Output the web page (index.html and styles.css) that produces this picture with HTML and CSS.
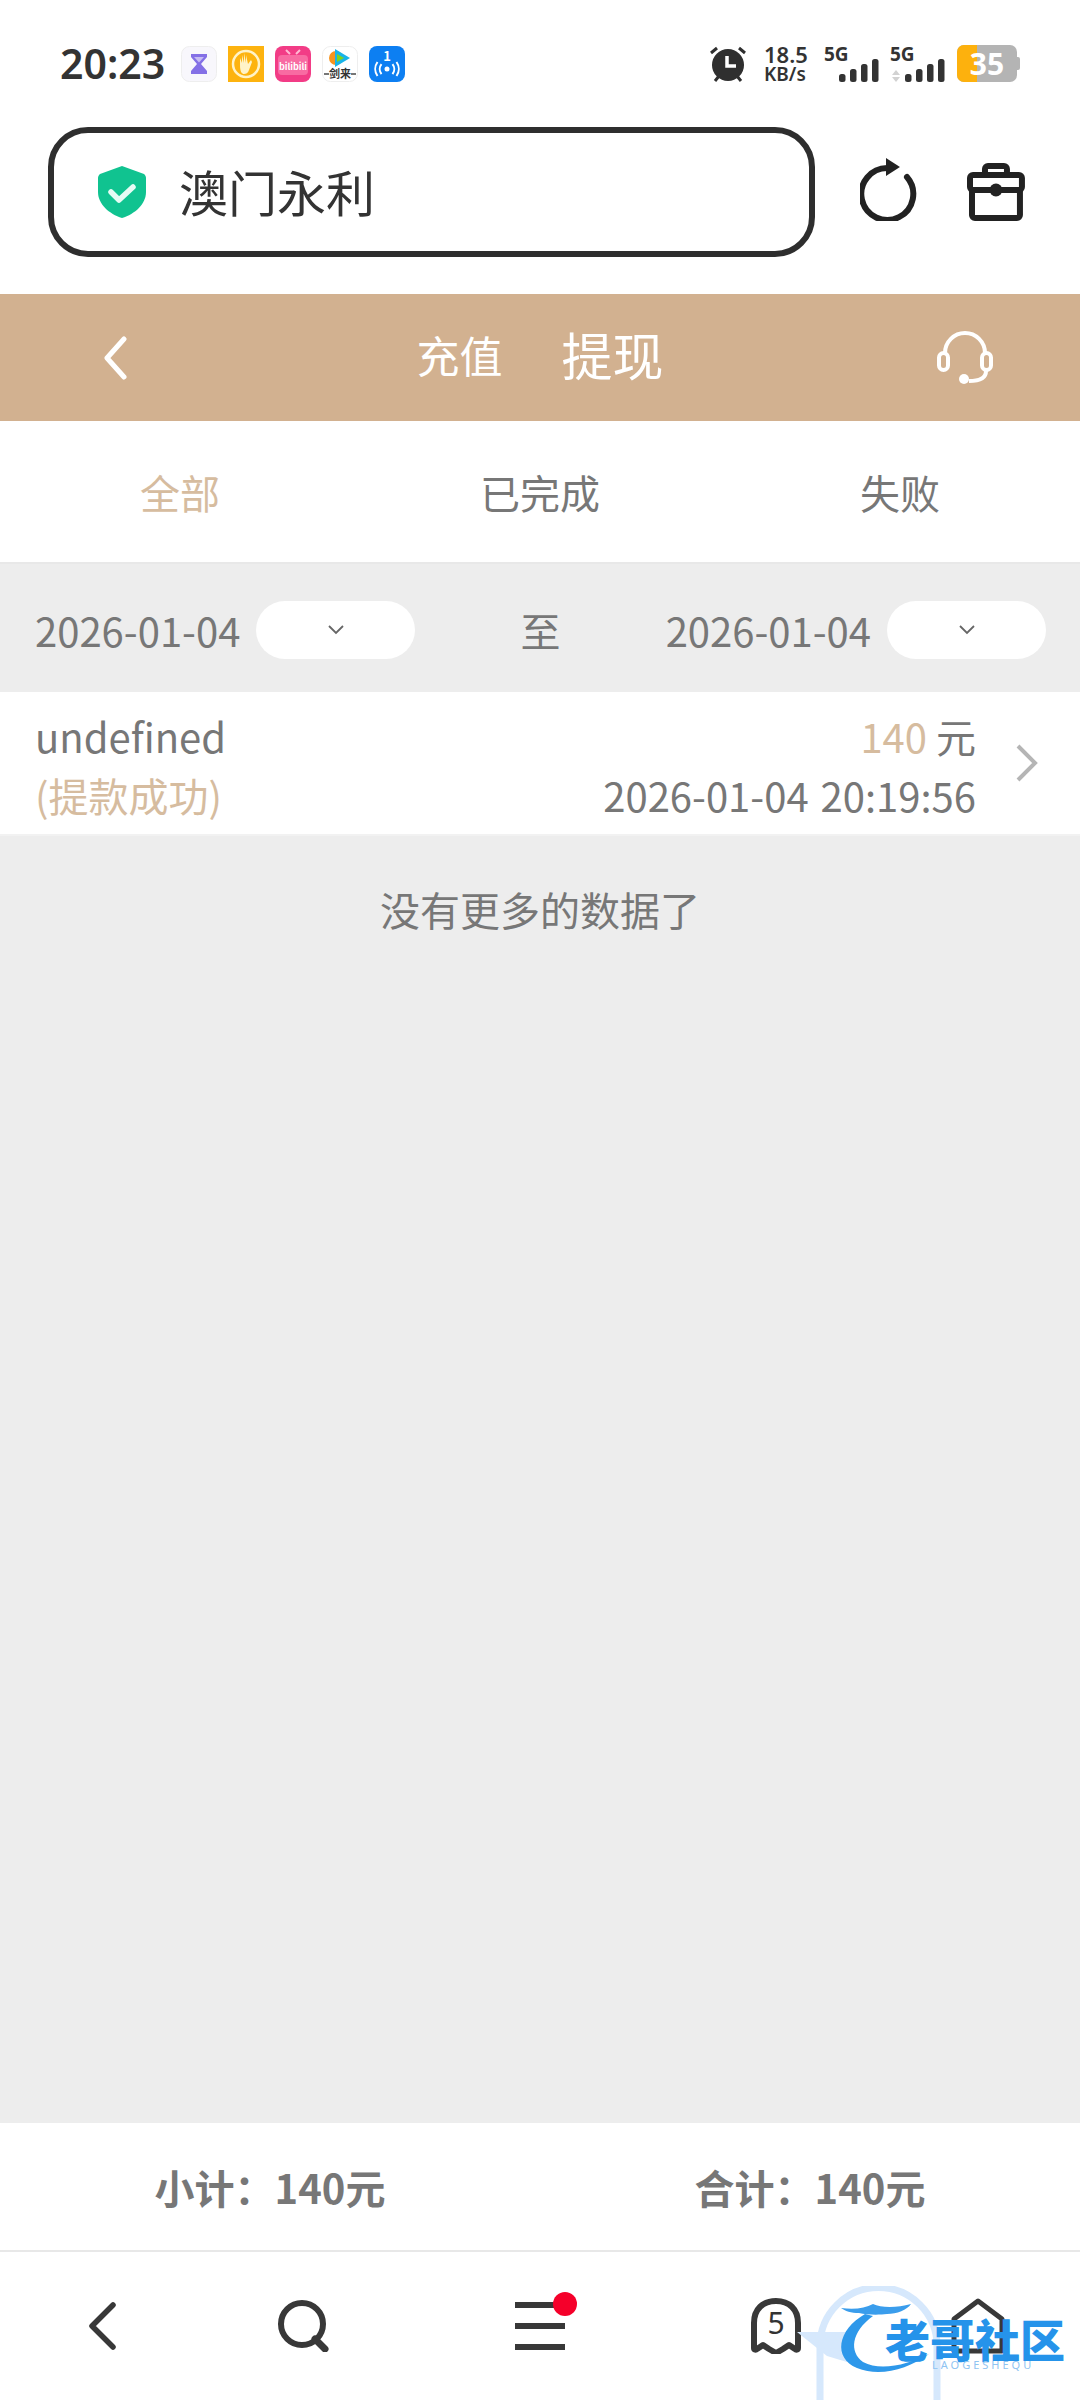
FILE: index.html
```html
<!DOCTYPE html>
<html lang="zh-CN">
<head>
    <meta charset="UTF-8">
    <meta name="viewport" content="width=device-width, initial-scale=1.0">
    <title>提现记录</title>
    <link rel="stylesheet" href="styles.css">
</head>
<body>
    <div class="page">
        <!-- phone status bar -->
        <div class="status-bar">
            <div class="status-left">
                <span class="clock">20:23</span>
                <div class="app-icons">
                    <svg class="app-icon" viewBox="0 0 36 36"><rect x="0.5" y="0.5" width="35" height="35" rx="8" fill="#f8f7fc" stroke="#eeeeee"/><path d="M10 8h16v3l-6 7 6 7v3H10v-3l6-7-6-7z" fill="#8470e6"/><path d="M13 11h10l-5 5.5z" fill="#c6bcf3"/></svg>
                    <svg class="app-icon" viewBox="0 0 36 36"><rect width="36" height="36" fill="#fdb30f"/><circle cx="18" cy="18" r="13" fill="none" stroke="#fff3c8" stroke-width="2.5"/><path d="M12 19v-7l2 5v-8l2 8V7l2 10V9l2 9 3-4 1 2-3 8c-1 3-3 4-5 4s-4-2-4-9z" fill="#fff3c8"/></svg>
                    <svg class="app-icon" viewBox="0 0 36 36"><rect width="36" height="36" rx="8" fill="#f23c86"/><path d="M11 4l4 4M25 4l-4 4" stroke="#ffb9d3" stroke-width="2"/><rect x="3" y="9" width="30" height="20" rx="4" fill="#f86ba2"/><text class="bili-text" x="18" y="24" text-anchor="middle">bilibili</text></svg>
                    <svg class="app-icon" viewBox="0 0 36 36"><rect x="0.5" y="0.5" width="35" height="35" rx="8" fill="#ffffff" stroke="#eeeeee"/><circle cx="14" cy="12" r="7" fill="#f7941e"/><path d="M13 3l15 9-15 9z" fill="#18b4e9"/><path d="M15 8l7 4-7 4z" fill="#7ed321"/><text class="tv-text" x="18" y="32" text-anchor="middle">剑来</text><path d="M2 28h5M29 28h5" stroke="#777" stroke-width="2"/></svg>
                    <svg class="app-icon" viewBox="0 0 36 36"><rect width="36" height="36" rx="8" fill="#0d7ff2"/><text class="cast-text" x="18" y="15" text-anchor="middle">1</text><circle cx="18" cy="23" r="2.5" fill="#fff"/><path d="M12.5 18a8 8 0 0 0 0 10M23.500 18a8 8 0 0 1 0 10M8.500 16a12 12 0 0 0 0 14M27.500 16a12 12 0 0 1 0 14" fill="none" stroke="#fff" stroke-width="2"/></svg>
                </div>
            </div>
            <div class="status-right">
                <svg class="alarm" viewBox="0 0 38 38"><path d="M2 8l6-5M36 8l-6-5" stroke="#2f2f2f" stroke-width="3"/><path d="M6 36l4-5M32 36l-4-5" stroke="#2f2f2f" stroke-width="3"/><circle cx="19" cy="20" r="16" fill="#2f2f2f"/><path d="M18 11v10h9" fill="none" stroke="#fff" stroke-width="3.500"/></svg>
                <div class="net-speed"><span>18.5</span><span class="net-unit">KB/s</span></div>
                <div class="signal">
                    <span class="signal-label">5G</span>
                    <svg class="signal-bars" viewBox="0 0 56 38"><rect x="15" y="29" width="6.500" height="8" rx="2.500"/><rect x="26" y="24" width="6.500" height="13" rx="2.500"/><rect x="37" y="19" width="6.500" height="18" rx="2.500"/><rect x="48" y="14" width="6.500" height="23" rx="2.500"/></svg>
                </div>
                <div class="signal">
                    <span class="signal-label">5G</span>
                    <svg class="signal-bars" viewBox="0 0 56 38"><path d="M2 30l4-5 4 5zM2 32l4 5 4-5z" fill="#d2d2d2"/><rect x="15" y="29" width="6.500" height="8" rx="2.500"/><rect x="26" y="24" width="6.500" height="13" rx="2.500"/><rect x="37" y="19" width="6.500" height="18" rx="2.500"/><rect x="48" y="14" width="6.500" height="23" rx="2.500"/></svg>
                </div>
                <div class="battery">
                    <svg class="battery-shape" viewBox="0 0 63 37"><rect width="60" height="37" rx="7" fill="#b4b4b4"/><path d="M7 0h13v37H7a7 7 0 0 1-7-7V7a7 7 0 0 1 7-7z" fill="#fdb10d"/><path d="M60 12h1a2 2 0 0 1 2 2v9a2 2 0 0 1-2 2h-1z" fill="#b4b4b4"/></svg>
                    <span class="battery-level">35</span>
                </div>
            </div>
        </div>

        <!-- browser address row -->
        <div class="toolbar">
            <div class="url-box">
                <svg class="shield" viewBox="0 0 48 52"><path d="M24 0l22 8c1 1 2 2 2 4v14c0 12-11 22-24 26C11 48 0 38 0 26V12c0-2 1-3 2-4z" fill="#10c390"/><path d="M13 26l8 8 14-13" fill="none" stroke="#e6fbf4" stroke-width="5.500" stroke-linecap="round" stroke-linejoin="round"/></svg>
                <span class="url-text">澳门永利</span>
            </div>
            <svg class="refresh" viewBox="0 0 58 64"><path d="M47 20a26 26 0 1 1-19-9" fill="none" stroke="#222" stroke-width="6" stroke-linecap="round"/><path d="M26 1l14 9-14 9z" fill="#222"/></svg>
            <svg class="toolbox" viewBox="0 0 58 58"><path d="M18 12V6a3 3 0 0 1 3-3h16a3 3 0 0 1 3 3v6" fill="none" stroke="#222" stroke-width="6"/><path d="M5 27v25a3 3 0 0 0 3 3h42a3 3 0 0 0 3-3V27" fill="none" stroke="#222" stroke-width="6"/><rect x="3" y="12" width="52" height="15" rx="3" fill="none" stroke="#222" stroke-width="6"/><circle cx="29" cy="27" r="6.500" fill="#222"/></svg>
        </div>

        <header class="title-bar">
            <svg class="title-back" viewBox="0 0 24 44"><path d="M21 3L4 22l17 19" fill="none" stroke="#fff" stroke-width="5" stroke-linecap="round" stroke-linejoin="round"/></svg>
            <div class="title-tabs">
                <span class="title-tab">充值</span>
                <span class="title-tab title-tab-active">提现</span>
            </div>
            <svg class="headset" viewBox="0 0 56 54"><path d="M8 24v-2a20 20 0 0 1 40 0v2" fill="none" stroke="#fff" stroke-width="4"/><rect x="2" y="22" width="9" height="17" rx="4.500" fill="none" stroke="#fff" stroke-width="4"/><rect x="45" y="22" width="9" height="17" rx="4.500" fill="none" stroke="#fff" stroke-width="4"/><path d="M49 40c0 7-7 10-17 10" fill="none" stroke="#fff" stroke-width="4"/><circle cx="27" cy="48" r="5" fill="#fff"/></svg>
        </header>

        <nav class="tabs">
            <a class="tab tab-active">全部</a>
            <a class="tab">已完成</a>
            <a class="tab">失败</a>
        </nav>

        <div class="filter">
            <div class="date-field">
                <span>2026-01-04</span>
                <div class="date-pill"><svg class="pill-arrow" viewBox="0 0 16 10"><path d="M1 1l7 7 7-7" fill="none" stroke="#666" stroke-width="1.800"/></svg></div>
            </div>
            <span>至</span>
            <div class="date-field">
                <span>2026-01-04</span>
                <div class="date-pill"><svg class="pill-arrow" viewBox="0 0 16 10"><path d="M1 1l7 7 7-7" fill="none" stroke="#666" stroke-width="1.800"/></svg></div>
            </div>
        </div>

        <main class="content">
            <div class="record">
                <div class="record-left">
                    <div>undefined</div>
                    <div class="tan">(提款成功)</div>
                </div>
                <div class="record-right">
                    <div><span class="tan">140</span> 元</div>
                    <div class="record-time">2026-01-04 20:19:56</div>
                </div>
                <svg class="record-arrow" viewBox="0 0 22 38"><path d="M2 2l17 17L2 36" fill="none" stroke="#b5b5b5" stroke-width="4"/></svg>
            </div>
            <p class="no-more">没有更多的数据了</p>
        </main>

        <div class="summary">
            <span>小计：140元</span>
            <span>合计：140元</span>
        </div>

        <!-- browser bottom bar -->
        <div class="bottom-nav">
            <div class="nav-item"><svg class="nav-back" viewBox="0 0 29 48"><path d="M26 3L5 24l21 21" fill="none" stroke="#383838" stroke-width="5.500" stroke-linecap="round" stroke-linejoin="round"/></svg></div>
            <div class="nav-item"><svg class="nav-search" viewBox="0 0 52 52"><circle cx="25" cy="24" r="21" fill="none" stroke="#383838" stroke-width="6"/><path d="M38 39l10 10" stroke="#383838" stroke-width="7" stroke-linecap="round"/></svg></div>
            <div class="nav-item">
                <div class="menu-icon">
                    <span class="menu-line"></span><span class="menu-line"></span><span class="menu-line"></span>
                    <span class="menu-dot"></span>
                </div>
            </div>
            <div class="nav-item">
                <div class="ghost">
                    <svg class="ghost-shape" viewBox="0 0 52 56"><path d="M4 50V25C4 11 13 3 26 3s22 8 22 22v25c0 2-2 2-3 1l-6-4-6 4-7 4-7-4-6-4-6 4c-1 1-3 1-3-1z" fill="none" stroke="#383838" stroke-width="6" stroke-linejoin="round"/></svg>
                    <span class="ghost-count">5</span>
                </div>
            </div>
            <div class="nav-item"><svg class="nav-home" viewBox="0 0 54 56"><path d="M3 53V21L27 3l24 18v32z" fill="none" stroke="#383838" stroke-width="5" stroke-linejoin="round"/></svg></div>
        </div>

        <!-- site watermark over the bottom bar -->
        <div class="watermark">
            <svg class="watermark-art" viewBox="0 0 290 114">
                <path d="M23 114V60a58 58 0 0 1 117 0v54" fill="none" stroke="#d6e8fc" stroke-width="7"/>
                <path d="M0 46h60l-10 30-20-6z" fill="#d6e8fc"/>
                <path d="M68 28C40 44 36 72 60 82c22 9 50 2 72-14-20 10-48 18-66 8C52 66 54 46 76 30z" fill="#2e98ea"/>
                <path d="M44 22c14 2 24 0 32-4 8 4 24 4 38 0-4 6-14 10-24 10-8 1-20 1-28-1-8 0-14-2-18-5z" fill="#3a9dec"/>
            </svg>
            <div class="watermark-name">老哥社区</div>
            <div class="watermark-sub">LAOGESHEQU</div>
        </div>
    </div>
</body>
</html>
```

FILE: styles.css
```css
* {
    box-sizing: border-box;
}

body {
    margin: 0;
    padding: 0;
    background: #ffffff;
    font-family: "Noto Sans CJK SC", "Noto Sans", sans-serif;
    color: #777777;
}

.page {
    position: relative;
    width: 1080px;
    height: 2400px;
    display: flex;
    flex-direction: column;
    overflow: hidden;
}

/* status bar */
.status-bar {
    height: 127px;
    flex-shrink: 0;
    padding: 0 60px;
    display: flex;
    justify-content: space-between;
    align-items: center;
}

.status-left,
.status-right,
.app-icons {
    display: flex;
    align-items: center;
}

.status-left {
    gap: 16px;
}

.clock {
    font-family: "Noto Sans", sans-serif;
    font-size: 41px;
    font-weight: 600;
    color: #333333;
    line-height: 1;
}

.app-icons {
    gap: 11px;
}

.app-icon {
    width: 36px;
    height: 36px;
}

.bili-text {
    font-size: 9px;
    font-weight: 700;
    fill: #ffffff;
}

.tv-text {
    font-size: 11px;
    font-weight: 700;
    fill: #333333;
}

.cast-text {
    font-size: 13px;
    font-weight: 700;
    fill: #ffffff;
}

.alarm {
    width: 38px;
    height: 38px;
    margin-right: 17px;
}

.net-speed {
    width: 44px;
    margin-right: 16px;
    display: flex;
    flex-direction: column;
    font-family: "Noto Sans", sans-serif;
    font-size: 22px;
    font-weight: 600;
    line-height: 20px;
    color: #333333;
    white-space: nowrap;
}

.net-unit {
    font-size: 19px;
}

.signal {
    position: relative;
    width: 56px;
    height: 38px;
    margin-right: 10px;
}

.signal-bars {
    width: 56px;
    height: 38px;
    display: block;
    fill: #333333;
}

.signal-label {
    position: absolute;
    left: 0;
    top: -3px;
    font-family: "Noto Sans", sans-serif;
    font-size: 19px;
    font-weight: 700;
    line-height: 24px;
    color: #333333;
}

.battery {
    position: relative;
    width: 63px;
    height: 37px;
    margin-left: 1px;
}

.battery-shape {
    width: 63px;
    height: 37px;
    display: block;
}

.battery-level {
    position: absolute;
    left: 0;
    top: 0;
    width: 60px;
    text-align: center;
    font-family: "Noto Sans", sans-serif;
    font-size: 30px;
    font-weight: 700;
    line-height: 37px;
    color: #ffffff;
}

/* address row */
.toolbar {
    height: 167px;
    flex-shrink: 0;
    padding: 0 55px 38px 48px;
    display: flex;
    align-items: center;
}

.url-box {
    width: 768px;
    height: 130px;
    padding-left: 44px;
    border: 6px solid #2e2e2e;
    border-radius: 40px;
    display: flex;
    align-items: center;
    gap: 33px;
}

.shield {
    width: 48px;
    height: 52px;
}

.url-text {
    font-size: 49px;
    color: #333333;
    line-height: 1;
    padding-bottom: 2px;
}

.refresh {
    width: 58px;
    height: 64px;
    margin-left: 45px;
    margin-bottom: 6px;
}

.toolbox {
    width: 58px;
    height: 58px;
    margin-left: 49px;
}

/* title bar */
.title-bar {
    height: 127px;
    flex-shrink: 0;
    padding: 0 87px 0 103px;
    background: #d2b190;
    color: #ffffff;
    display: grid;
    grid-template-columns: 1fr auto 1fr;
    align-items: center;
}

.title-back {
    width: 24px;
    height: 44px;
}

.title-tabs {
    display: flex;
    align-items: center;
    gap: 59px;
    margin-left: -16px;
    padding-bottom: 6px;
}

.title-tab {
    font-size: 43px;
    line-height: 1;
}

.title-tab-active {
    font-size: 51px;
}

.headset {
    width: 56px;
    height: 54px;
    justify-self: end;
}

/* tabs */
.tabs {
    height: 143px;
    flex-shrink: 0;
    border-bottom: 2px solid #e8e8e8;
    display: grid;
    grid-template-columns: repeat(3, 1fr);
    align-items: center;
    text-align: center;
    font-size: 40px;
}

.tab-active {
    color: #d6bc9f;
}

/* date filter */
.filter {
    height: 128px;
    flex-shrink: 0;
    padding: 3px 34px 0 35px;
    background: #ededed;
    display: flex;
    justify-content: space-between;
    align-items: center;
    font-size: 40px;
}

.date-field {
    display: flex;
    align-items: center;
    gap: 16px;
}

.date-pill {
    width: 159px;
    height: 58px;
    border-radius: 29px;
    background: #ffffff;
    display: flex;
    justify-content: center;
    align-items: center;
}

.pill-arrow {
    width: 16px;
    height: 10px;
}

/* list */
.content {
    flex: 1;
    background: #ededed;
}

.record {
    height: 144px;
    padding: 6px 42px 0 35px;
    background: #ffffff;
    border-bottom: 2px solid #f2f2f2;
    display: flex;
    align-items: center;
    font-size: 40px;
    line-height: 59px;
}

.record-left {
    flex: 1;
}

.record-right {
    text-align: right;
}

.record-time {
    word-spacing: 3px;
}

.tan {
    color: #d6bc9f;
}

.record-arrow {
    width: 22px;
    height: 38px;
    margin-left: 40px;
    margin-bottom: 6px;
}

.no-more {
    margin: 43px 0 0;
    text-align: center;
    font-size: 40px;
    line-height: 60px;
}

/* totals */
.summary {
    height: 127px;
    flex-shrink: 0;
    background: #ffffff;
    display: grid;
    grid-template-columns: 1fr 1fr;
    align-items: center;
    text-align: center;
    font-size: 40px;
    font-weight: 700;
}

/* bottom bar */
.bottom-nav {
    height: 150px;
    flex-shrink: 0;
    border-top: 2px solid #e8e8e8;
    display: grid;
    grid-template-columns: 202px 202px 272px 200px 204px;
    align-items: center;
}

.nav-item {
    display: flex;
    justify-content: center;
    align-items: center;
}

.nav-back {
    width: 29px;
    height: 48px;
}

.nav-search {
    width: 52px;
    height: 52px;
}

.menu-icon {
    position: relative;
    width: 50px;
    height: 48px;
    display: flex;
    flex-direction: column;
    justify-content: space-between;
}

.menu-line {
    height: 6px;
    background: #383838;
}

.menu-dot {
    position: absolute;
    top: -10px;
    right: -12px;
    width: 24px;
    height: 24px;
    border-radius: 50%;
    background: #f5002a;
}

.ghost {
    position: relative;
    width: 52px;
    height: 56px;
}

.ghost-shape {
    width: 52px;
    height: 56px;
}

.ghost-count {
    position: absolute;
    top: 0;
    left: 0;
    width: 100%;
    text-align: center;
    font-family: "Noto Sans", sans-serif;
    font-size: 30px;
    line-height: 50px;
    color: #333333;
}

.nav-home {
    width: 54px;
    height: 56px;
}

/* watermark */
.watermark {
    position: absolute;
    left: 797px;
    top: 2286px;
    width: 283px;
    height: 114px;
}

.watermark-art {
    position: absolute;
    left: 0;
    top: 0;
    width: 290px;
    height: 114px;
}

.watermark-name {
    position: absolute;
    left: 88px;
    top: 34px;
    font-size: 45px;
    font-weight: 900;
    line-height: 38px;
    color: #2593ea;
    white-space: nowrap;
}

.watermark-sub {
    position: absolute;
    left: 135px;
    top: 72px;
    font-family: "Noto Sans", sans-serif;
    font-size: 11px;
    letter-spacing: 3px;
    line-height: 14px;
    color: #8fc4f2;
    white-space: nowrap;
}
```
